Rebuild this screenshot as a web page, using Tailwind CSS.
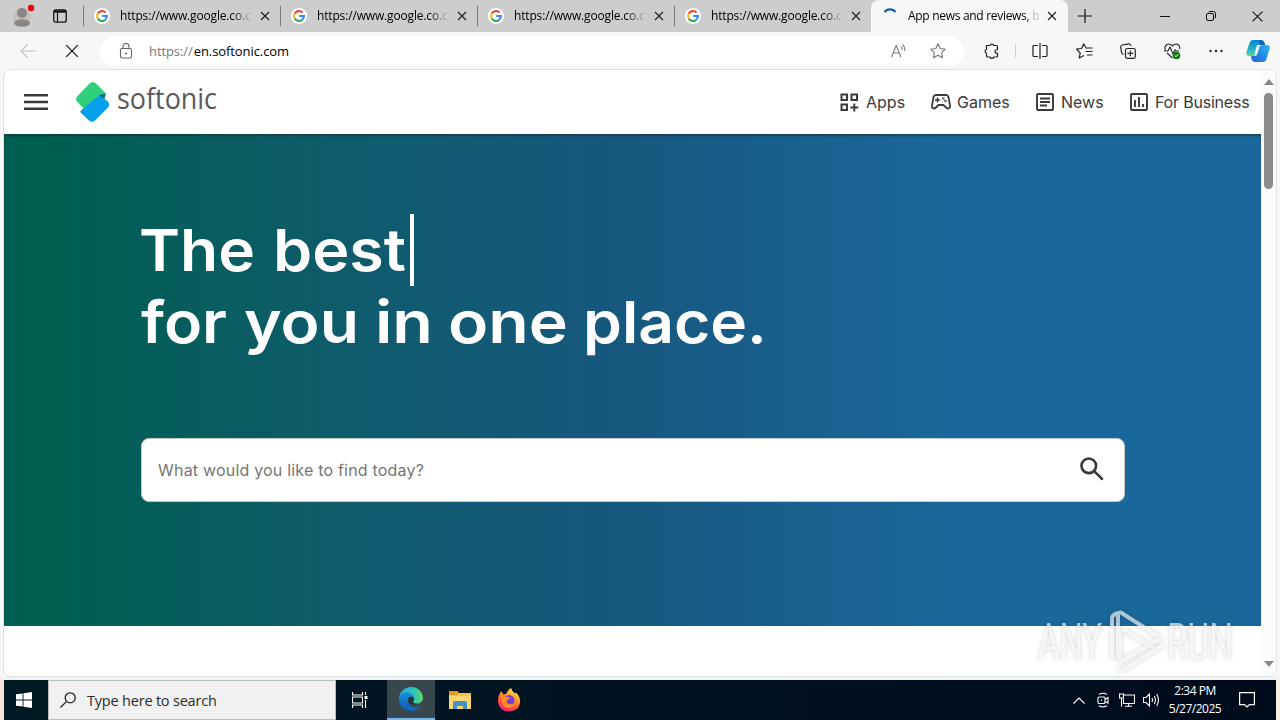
<!DOCTYPE html>
<html lang="en">
  <head>
    <meta charset="UTF-8" />
    <title>App news and reviews, best software downloads and discovery - Softonic</title>
    <meta name="viewport" content="width=device-width, initial-scale=1" />
    <script src="https://cdn.jsdelivr.net/npm/@tailwindcss/browser@4"></script>
  </head>
  <body class="w-[1280px] h-[720px] overflow-hidden relative flex flex-col bg-[#f7f7f7] font-['Open_Sans',sans-serif] text-black">
    <!-- shared icons -->
    <svg class="hidden">
      <symbol id="google" viewBox="0 0 16 16">
        <circle cx="8" cy="8" r="8" fill="#fff" />
        <g fill="none" stroke-width="2.1">
          <path d="M11.6 4.6A5 5 0 0 0 3.7 5.5" stroke="#ea4335" />
          <path d="M3.7 5.5a5 5 0 0 0 0 5" stroke="#fbbc05" />
          <path d="M3.7 10.5a5 5 0 0 0 7.6 1.2" stroke="#34a853" />
          <path d="M11.3 11.7A5 5 0 0 0 13 8H8.2" stroke="#4285f4" />
        </g>
      </symbol>
      <symbol id="close" viewBox="0 0 10 10">
        <path d="M1 1l8 8M9 1L1 9" stroke="#222" stroke-width="1.2" fill="none" />
      </symbol>
    </svg>

    <!-- tab strip -->
    <div class="h-8 shrink-0 flex items-stretch bg-[#cdcdcd] text-[12px]">
      <div class="w-[83px] flex items-center">
        <svg class="w-[24px] h-[24px] ml-[12px]" viewBox="0 0 24 24">
          <circle cx="10" cy="13" r="9" fill="#c4c1bf" />
          <circle cx="10" cy="9" r="5" fill="#8a8684" />
          <ellipse cx="10" cy="19" rx="8" ry="3.8" fill="#8a8684" />
          <circle cx="19" cy="4" r="3.2" fill="#e30613" />
        </svg>
        <svg class="w-[14px] h-[14px] ml-[17px]" viewBox="0 0 14 14" fill="none" stroke="#111">
          <rect x=".8" y=".8" width="12.4" height="12.4" rx="2" stroke-width="1.3" />
          <path d="M1 2.500h12" stroke-width="2.400" />
          <path d="M4.5 3v10" stroke-width="1.2" />
        </svg>
      </div>
      <div class="w-[197px] flex items-center">
        <span class="w-px h-5 bg-[#777]"></span>
        <svg class="w-4 h-4 ml-[10px]"><use href="#google" /></svg>
        <span class="ml-[10px] w-[132px] whitespace-nowrap tracking-[-0.16px] mask-r-from-85% mask-r-to-100%">https://www.google.co.c</span>
        <svg class="w-[10px] h-[10px] ml-[8px]"><use href="#close" /></svg>
      </div>
      <div class="w-[197px] flex items-center">
        <span class="w-px h-5 bg-[#777]"></span>
        <svg class="w-4 h-4 ml-[10px]"><use href="#google" /></svg>
        <span class="ml-[10px] w-[132px] whitespace-nowrap tracking-[-0.16px] mask-r-from-85% mask-r-to-100%">https://www.google.co.c</span>
        <svg class="w-[10px] h-[10px] ml-[8px]"><use href="#close" /></svg>
      </div>
      <div class="w-[197px] flex items-center">
        <span class="w-px h-5 bg-[#777]"></span>
        <svg class="w-4 h-4 ml-[10px]"><use href="#google" /></svg>
        <span class="ml-[10px] w-[132px] whitespace-nowrap tracking-[-0.16px] mask-r-from-85% mask-r-to-100%">https://www.google.co.c</span>
        <svg class="w-[10px] h-[10px] ml-[8px]"><use href="#close" /></svg>
      </div>
      <div class="w-[197px] flex items-center">
        <span class="w-px h-5 bg-[#777]"></span>
        <svg class="w-4 h-4 ml-[10px]"><use href="#google" /></svg>
        <span class="ml-[10px] w-[132px] whitespace-nowrap tracking-[-0.16px] mask-r-from-85% mask-r-to-100%">https://www.google.co.c</span>
        <svg class="w-[10px] h-[10px] ml-[8px]"><use href="#close" /></svg>
      </div>
      <div class="w-[197px] flex items-center bg-[#f7f7f7] rounded-t-lg">
        <svg class="w-4 h-4 ml-[11px]" viewBox="0 0 16 16"><path d="M2.500 4A7 7 0 0 1 13.500 4" fill="none" stroke="#1a5c9e" stroke-width="2.200" /></svg>
        <span class="ml-[10px] w-[131px] whitespace-nowrap tracking-[-0.3px] mask-r-from-88% mask-r-to-108%">App news and reviews, <span class="text-[#999]">b</span></span>
        <svg class="w-[10px] h-[10px] ml-[8px]"><use href="#close" /></svg>
      </div>
      <div class="flex-1 flex items-center">
        <svg class="w-[14px] h-[14px] ml-[10px]" viewBox="0 0 14 14"><path d="M7 0v14M0 7h14" stroke="#111" stroke-width="1.2" /></svg>
        <svg class="w-[10px] h-[10px] ml-[68px]" viewBox="0 0 10 10"><path d="M0 5.5h10" stroke="#111" /></svg>
        <svg class="w-[10px] h-[10px] ml-[36px]" viewBox="0 0 10 10" fill="none" stroke="#111"><rect x=".5" y="2.5" width="7" height="7" rx="1.5" /><path d="M2.5 1.2Q3 .5 4 .5h3.500q2 0 2 2V6q0 1-.7 1.500" /></svg>
        <svg class="w-[11px] h-[11px] ml-[36px]" viewBox="0 0 10 10"><path d="M.5.5l9 9M9.500.5l-9 9" stroke="#111" /></svg>
      </div>
    </div>

    <!-- address bar -->
    <div class="h-[37px] shrink-0 flex items-center">
      <svg class="w-4 h-4 ml-5" viewBox="0 0 16 16" fill="none" stroke="#c3c3c3" stroke-width="1.2"><path d="M16 8H1M7.500 1.500L1 8l6.500 6.500" /></svg>
      <svg class="w-3 h-3 ml-[30px]" viewBox="0 0 12 12"><path d="M0 0l12 12M12 0L0 12" stroke="#111" stroke-width="1.2" /></svg>
      <div class="ml-[22px] w-[864px] h-[30px] rounded-full bg-white flex items-center">
        <svg class="w-4 h-4 ml-[18px]" viewBox="0 0 16 16" fill="none" stroke="#666" stroke-width="1.1"><rect x="2.500" y="5.500" width="11" height="9.500" rx="1.500" /><path d="M5 5.500V3.500a3 3 0 0 1 6 0v2" /><circle cx="8" cy="10.500" r=".5" fill="#666" /></svg>
        <span class="ml-[15px] mt-0.5 w-[741px] text-[13px] tracking-[-0.08px] whitespace-nowrap"><span class="text-[#777]">https://</span><span class="ml-px">en.softonic.com</span></span>
        <svg class="w-4 h-4" viewBox="0 0 16 16" fill="none" stroke="#777" stroke-width="1.1"><path d="M1.500 14L6.200 2.500 10.900 14M3.200 10h6M11 3.500q1.300 1.500 1 3.500M12.500 1.500q3 2.500 2 6.500" /></svg>
        <svg class="w-4 h-4 ml-[24px]" viewBox="0 0 16 16" fill="none" stroke="#777" stroke-width="1.1" stroke-linejoin="round"><path d="M8 .8l2.200 4.700 5.100.7-3.700 3.500.9 5.100L8 12.300l-4.500 2.500.9-5.100L.7 6.200l5.100-.7z" /></svg>
      </div>
      <svg class="w-4 h-4 ml-[19px]" viewBox="0 0 16 16" fill="none" stroke="#222" stroke-width="1.2" stroke-linejoin="round"><path d="M3.500 2.500H7a1.900 1.900 0 0 1 3.700 0H13.500a1 1 0 0 1 1 1V6.500q-2.500 0-2.500 1.900t2.500 1.900V13a1 1 0 0 1-1 1H10.700a1.900 1.900 0 0 1-3.700 0H4.500a1 1 0 0 1-1-1V10.200a1.900 1.900 0 0 1 0-3.700z" /></svg>
      <span class="w-px h-[14px] ml-[16px] bg-[#d0d0d0]"></span>
      <svg class="w-4 h-4 ml-4" viewBox="0 0 16 16" fill="none" stroke="#222" stroke-width="1.2"><path d="M6 2.500H2a1 1 0 0 0-1 1v9a1 1 0 0 0 1 1h4M10 2.500h4a1 1 0 0 1 1 1v9a1 1 0 0 1-1 1h-4M8 0v16" /></svg>
      <svg class="w-[17px] h-4 ml-[28px]" viewBox="0 0 17 16" fill="none" stroke="#222" stroke-width="1.2" stroke-linejoin="round"><path d="M10.500 5.500L7.700 1 5.500 5.500l-5 .7L4.200 10l-1 5L8 12.500M11 5H16.500M9.500 8.500h7M11 12h5.500" /></svg>
      <svg class="w-4 h-4 ml-[27px]" viewBox="0 0 16 16" fill="none" stroke="#222" stroke-width="1.2"><rect x="5.500" y="5.500" width="9.800" height="9.800" rx="1.800" /><path d="M10.400 7.500v5.800M7.500 10.400h5.800M3.500 11.500Q1.800 11 1.500 9L.7 4.500Q.5 2.500 2.500 2L8.500.8Q10.500.5 11 3" /></svg>
      <svg class="w-[17px] h-4 ml-[28px]" viewBox="0 0 17 16"><path d="M1.500 7C0 4 2 1 4.500 1Q7 1 8.500 3 10 1 12.500 1 16 1.500 15.700 6M0 8h4l2-4 3 7 2-4 1 1h3M3 10l5.500 5" fill="none" stroke="#222" stroke-width="1.100" /><circle cx="12.500" cy="12.500" r="3.800" fill="#107c10" /><path d="M10.800 12.500l1.300 1.200 2.200-2.500" fill="none" stroke="#fff" /></svg>
      <svg class="w-[14px] h-4 ml-[28px]" viewBox="0 0 14 16" fill="#222"><circle cx="1.500" cy="8" r="1.200" /><circle cx="7" cy="8" r="1.200" /><circle cx="12.500" cy="8" r="1.200" /></svg>
      <svg class="w-6 h-6 ml-[23px]" viewBox="0 0 24 24">
        <defs>
          <linearGradient id="cp1" x1="0" y1="0" x2="0" y2="1"><stop offset="0" stop-color="#0a86d8" /><stop offset=".6" stop-color="#22b5c8" /><stop offset="1" stop-color="#62d68c" /></linearGradient>
          <linearGradient id="cp2" x1="1" y1="0" x2="0" y2="1"><stop offset="0" stop-color="#2cb9f2" /><stop offset="1" stop-color="#1f5fdc" /></linearGradient>
        </defs>
        <path d="M7 1h8q2.500 0 3.300 2.500L19 6h-3.500q-2 0-2.700 2L10.500 15q-.8 2-3 2H3q-3.500 0-2.500-4L3.500 4Q4.500 1 7 1z" fill="url(#cp1)" />
        <path d="M15 1q2.500 0 3.300 2.500L19 6h-3.500l-1.500.3L12.500 1z" fill="#1464c0" />
        <path d="M17 23H9q-2.500 0-3.300-2.500L5 17h3.500q2 0 2.700-2L13.500 8q.8-2 3-2H21q3.500 0 2.500 4l-3 10q-1 3-3.500 3z" fill="url(#cp2)" />
        <path d="M11 6h4q-1.500.5-2 2.200L11 15q-.6 2-2.500 2L9 13z" fill="#f7f7f7" />
      </svg>
    </div>

    <!-- page -->
    <div class="mx-[3px] h-[608px] shrink-0 flex rounded-lg border border-[#e2e2e2] bg-white overflow-hidden">
      <div class="w-[1257px] flex flex-col">
        <header class="h-16 shrink-0 flex items-center font-['Inter',sans-serif] text-[16px] text-[#3a3a3c]">
          <svg class="w-6 h-4 ml-5" viewBox="0 0 24 16"><path d="M0 1.200h24M0 8h24M0 14.800h24" stroke="#3a3a3c" stroke-width="2.400" /></svg>
          <svg class="w-[146px] h-[46px] ml-7" viewBox="0 -2 146 46">
            <path d="M13.500 2.500q3-3 6.500 0l10 10Q24 12.500 19 18L8 28 1.500 21q-3-3 0-6z" fill="#2fcf7c" />
            <path d="M4.800 29.500L20 16.500Q24.500 12.800 29.500 13l-1.200 4.500 4 3.500q2 3-.8 6L19 39.500q-3 2.500-6 0L5 32q-1.500-1.500-.2-2.500z" fill="#08a0ea" />
            <path d="M22.500 14.500q3-2 7.500-2l-1.500 5z" fill="#0e7380" />
            <text x="41" y="28" textLength="100" lengthAdjust="spacingAndGlyphs" font-family="Open Sans" font-weight="400" font-size="29" fill="#58585c">softonic</text>
          </svg>
          <nav class="ml-auto flex items-center pr-[13px]">
            <svg class="w-[19px] h-[19px]" viewBox="0 0 19 19" fill="none" stroke="#3a3a3c" stroke-width="2"><path d="M1.500 1.500h5.500v5.500H1.500zM11.500 1.500h5.500v5.500h-5.500zM1.500 11.500h5.500v5.500H1.500zM14.300 10.500v8M10.300 14.500h8" /></svg>
            <span class="ml-[7px] w-[40px]">Apps</span>
            <svg class="w-5 h-4 ml-[25px]" viewBox="0 0 20 16" fill="none" stroke="#3a3a3c" stroke-width="1.800"><path d="M5 1h10q2 0 2.500 2l1.500 8.500q.3 3-2 3-1 0-2-1L12.500 11h-5L5 13.500q-1 1-2 1-2.300 0-2-3L2.500 3Q3 1 5 1z" /><path d="M6.500 3.500v5M4 6h5" stroke-width="1.500" /><circle cx="12.300" cy="4.500" r=".4" /><circle cx="14.500" cy="7" r=".4" /></svg>
            <span class="ml-[6px] w-[53px]">Games</span>
            <svg class="w-[18px] h-[18px] ml-[26px]" viewBox="0 0 18 18" fill="none" stroke="#3a3a3c" stroke-width="1.900"><rect x="1" y="1" width="16" height="16" rx="1" /><path d="M4 5.500h10M4 9h10M4 12.500h7" /></svg>
            <span class="ml-[7px] w-[43px]">News</span>
            <svg class="w-[18px] h-[18px] ml-[26px]" viewBox="0 0 18 18" fill="none" stroke="#3a3a3c" stroke-width="1.900"><rect x="1" y="1" width="16" height="16" rx="1" /><path d="M5 7v7M9 4v10M13 11v3" /></svg>
            <span class="ml-[7px] w-[93px] whitespace-nowrap tracking-[-0.2px]">For Business</span>
          </nav>
        </header>
        <main class="h-[492px] shrink-0 px-[127px] pt-[70px] bg-[linear-gradient(90deg,#005f50_3%,#0f5b6c_28%,#17587f_50%,#1a689b_75%)] shadow-[inset_0_2px_2px_rgba(20,40,50,0.5)]">
          <svg class="w-[660px] h-[180px] font-['Inter']" viewBox="-10 -10 660 180" fill="#fff" font-weight="600" font-size="58">
            <text y="57">
              <tspan x="-2" textLength="116" lengthAdjust="spacingAndGlyphs">The</tspan>
              <tspan x="132" textLength="133" lengthAdjust="spacingAndGlyphs">best</tspan>
            </text>
            <path d="M269 0h4v72h-4z" />
            <text y="129">
              <tspan x="0" textLength="86" lengthAdjust="spacingAndGlyphs">for</tspan>
              <tspan x="103" textLength="115" lengthAdjust="spacingAndGlyphs">you</tspan>
              <tspan x="234" textLength="58" lengthAdjust="spacingAndGlyphs">in</tspan>
              <tspan x="307" textLength="120" lengthAdjust="spacingAndGlyphs">one</tspan>
              <tspan x="442" textLength="184" lengthAdjust="spacingAndGlyphs">place.</tspan>
            </text>
          </svg>
          <div class="ml-2.5 mt-[54px] w-[984px] h-16 rounded-lg bg-white border border-[#c5c9cc] flex items-center font-['Inter',sans-serif] text-[16px] tracking-[0.2px] text-[#757575]">
            <span class="ml-4">What would you like to find today?</span>
            <svg class="w-6 h-6 ml-auto mr-5 mb-0.5" viewBox="0 0 24 24" fill="none" stroke="#3a3a3c" stroke-width="2.600"><circle cx="8.800" cy="8.800" r="7.300" /><path d="M14.200 14.200l8.500 8.500" /></svg>
          </div>
        </main>
      </div>
      <!-- scrollbar -->
      <div class="flex-1 bg-[#fbfbfb] flex flex-col items-center py-[9px]">
        <svg class="w-[10px] h-[6px] shrink-0" viewBox="0 0 10 6"><path d="M0 6L5 0l5 6z" fill="#878787" /></svg>
        <span class="mt-2 w-[9px] h-24 rounded-full bg-[#8b8b8b]"></span>
        <svg class="w-[10px] h-[6px] mt-auto shrink-0" viewBox="0 0 10 6"><path d="M0 0l5 6 5-6z" fill="#878787" /></svg>
      </div>
    </div>
    <div class="h-[3px] shrink-0 bg-[#eef3f4]"></div>

    <!-- taskbar -->
    <div class="h-10 shrink-0 flex border-l-4 border-l-[#fbe0dc] border-r-4 border-r-[#f8eee2] bg-[linear-gradient(90deg,#001a24,#000b1c)] text-white">
      <div class="w-[44px] flex items-center justify-center pr-1">
        <svg class="w-4 h-4" viewBox="0 0 16 16" fill="#fff"><path d="M0 2.300L6.600 1.400V7.500H0zM7.500 1.200L16 0v7.500H7.500zM0 8.500h6.600v6.100L0 13.700zM7.500 8.500H16V16l-8.500-1.200z" /></svg>
      </div>
      <div class="w-[288px] bg-[#f1f1f1] border border-[#b9bcbd] flex items-center text-[#2b2b2b]">
        <svg class="w-4 h-4 ml-[11px]" viewBox="0 0 16 16" fill="none" stroke="#222" stroke-width="1.300"><circle cx="10.200" cy="5.800" r="5" /><path d="M6.600 9.400L.5 15.500" /></svg>
        <span class="ml-[11px] mt-0.5 text-[14.500px] tracking-[-0.2px]">Type here to search</span>
      </div>
      <div class="w-[51px] flex items-center justify-center pr-[3px]">
        <svg class="w-4 h-4" viewBox="0 0 16 16" fill="none" stroke="#fff" stroke-width="1.100"><path d="M.5 0v3h10V0M.5 16v-3h10v3M.5 5h10v6H.5zM13.500 0v3M13.500 8v8" /><path d="M12.500 4h3v3h-3z" fill="#fff" stroke="none" /></svg>
      </div>
      <div class="w-12 bg-[#38474e] border-b-2 border-b-[#76b9ed] flex items-center justify-center">
        <svg class="w-6 h-6" viewBox="0 0 24 24">
          <defs>
            <linearGradient id="eg1" x1="0" y1="0" x2="1" y2="0"><stop offset="0" stop-color="#2aa5e4" /><stop offset=".6" stop-color="#2cc5c0" /><stop offset="1" stop-color="#5fd860" /></linearGradient>
            <linearGradient id="eg2" x1="0" y1="0" x2="0" y2="1"><stop offset="0" stop-color="#1b8fdc" /><stop offset="1" stop-color="#0c5ab0" /></linearGradient>
          </defs>
          <path d="M0 12C0 5 5.500 0 12 0s12 5 12 10.500c0 4-3 6-6 6-4 0-4-1.500-3-3 1-3-1-5.500-4-5.500-5 0-8 2-11 4z" fill="url(#eg1)" />
          <path d="M0 12c0-4 4-6.500 8-6.500 3.500 0 6.500 2 6.500 5-3-2-6 0-5.500 4 .5 5 6 7.500 12.500 4.500C19.500 22 16 24 12 24 5 24 0 18.500 0 12z" fill="url(#eg2)" />
          <path d="M9 14c-.5 5 6 8 12.500 5-2 3-5.500 4.500-9 5C8 22.500 6 18 9 14z" fill="#1769b8" />
          <path d="M10 10.500q3-2 4.300 1c.4 1.500-1.300 2.500-.3 4q1 1 3 1-5 2-7.500-1.500-1.200-2 .5-4.500z" fill="#26353c" />
        </svg>
      </div>
      <div class="w-[50px] flex items-center justify-center">
        <svg class="w-[22px] h-[18px]" viewBox="0 0 22 18">
          <path d="M0 0h8l2 2h12v16H0z" fill="#f6c34a" /><path d="M0 0h8l2 2-2 2H0z" fill="#e39a1c" /><path d="M0 5h22v13H0z" fill="#f8d772" />
          <path d="M4 18v-6q0-2 2-2h10q2 0 2 2v6h-4v-3H8v3z" fill="#4593c4" />
        </svg>
      </div>
      <div class="w-12 flex items-center justify-center">
        <svg class="w-6 h-6" viewBox="0 0 24 24">
          <defs>
            <linearGradient id="ff" x1=".8" y1="0" x2=".3" y2="1"><stop offset="0" stop-color="#fff04a" /><stop offset=".4" stop-color="#ff9a28" /><stop offset=".75" stop-color="#ff4340" /><stop offset="1" stop-color="#e8208a" /></linearGradient>
          </defs>
          <path d="M4 3l2.500 3.500L9 6q1-3 5-6 1 3.500 4 5.500l1-1q5 5 4 10.500-1.500 8-11 8.500Q2 23 1 14 .5 8 4 3z" fill="url(#ff)" />
          <circle cx="12" cy="12.500" r="5.500" fill="#7340d6" />
          <path d="M4 9q3-2 6 0l3 .5q-1 2-3 2.500-1.500 3 1.500 4 4 1 6-1.500-1 6-7 5.500Q4 19 4 9z" fill="#ff8a25" />
        </svg>
      </div>
      <div class="ml-auto flex items-center pr-[21px]">
        <svg class="w-3 h-[7px]" viewBox="0 0 12 7"><path d="M.5 6.500L6 1l5.500 5.500" fill="none" stroke="#fff" stroke-width="1.200" /></svg>
        <svg class="w-3 h-4 ml-[12px]" viewBox="0 0 12 16" fill="none" stroke="#fff" stroke-width="1.100"><rect x="1" y="5" width="7" height="6.500" rx="1" /><path d="M8 7.500L11 5.500v5.500L8 9.500M2 2.500q4-2.500 8 0M2 13.800q4 2.500 8 0M4.500 7.500v1.500" /></svg>
        <svg class="w-4 h-4 ml-[10px]" viewBox="0 0 16 16" fill="none" stroke="#fff" stroke-width="1.100"><path d="M5 3h10.500v8.500H4.500V7M9.500 11.500V14M6 14.300h7M.5 2h4v4h-4zM2.500 6v8.500" /></svg>
        <svg class="w-[17px] h-4 ml-[8px]" viewBox="0 0 17 16" fill="none" stroke="#fff" stroke-width="1.100"><path d="M.5 5.500h2.500L6.500 2v12L3 10.500H.5zM9 6q1 2 0 4M11.300 4q2.200 4 0 8M13.700 2q3.500 6 0 12" /></svg>
        <div class="ml-[8px] w-[54px] flex flex-col items-center text-[12px] leading-[18px] whitespace-nowrap tracking-[-0.5px]">
          <span>2:34 PM</span>
          <span>5/27/2025</span>
        </div>
        <svg class="w-4 h-4 ml-[17px]" viewBox="0 0 16 16" fill="none" stroke="#fff" stroke-width="1.200"><path d="M.6.6h14.800v12H10.500L8 15l-2.500-2.400H.6z" /></svg>
      </div>
    </div>

    <!-- watermark -->
    <svg class="absolute left-[1036px] top-[608px] w-[204px] h-[66px] drop-shadow-[0_0_2px_rgba(0,0,0,0.28)]" viewBox="0 0 204 66" font-family="Roboto" font-size="52" fill="#fff" fill-opacity=".65">
      <text x="2" y="52" textLength="64" lengthAdjust="spacingAndGlyphs">ANY</text>
      <text x="131" y="52" textLength="66" lengthAdjust="spacingAndGlyphs">RUN</text>
      <path d="M76 51V10q0-3 6-5M82 50V6q2-3 5 0l38 24-42 25M84 22v30M88 22l32 19M82 61q3 2 7 0l38-24" fill="none" stroke="#fff" stroke-opacity=".65" stroke-width="4" />
    </svg>
  </body>
</html>
